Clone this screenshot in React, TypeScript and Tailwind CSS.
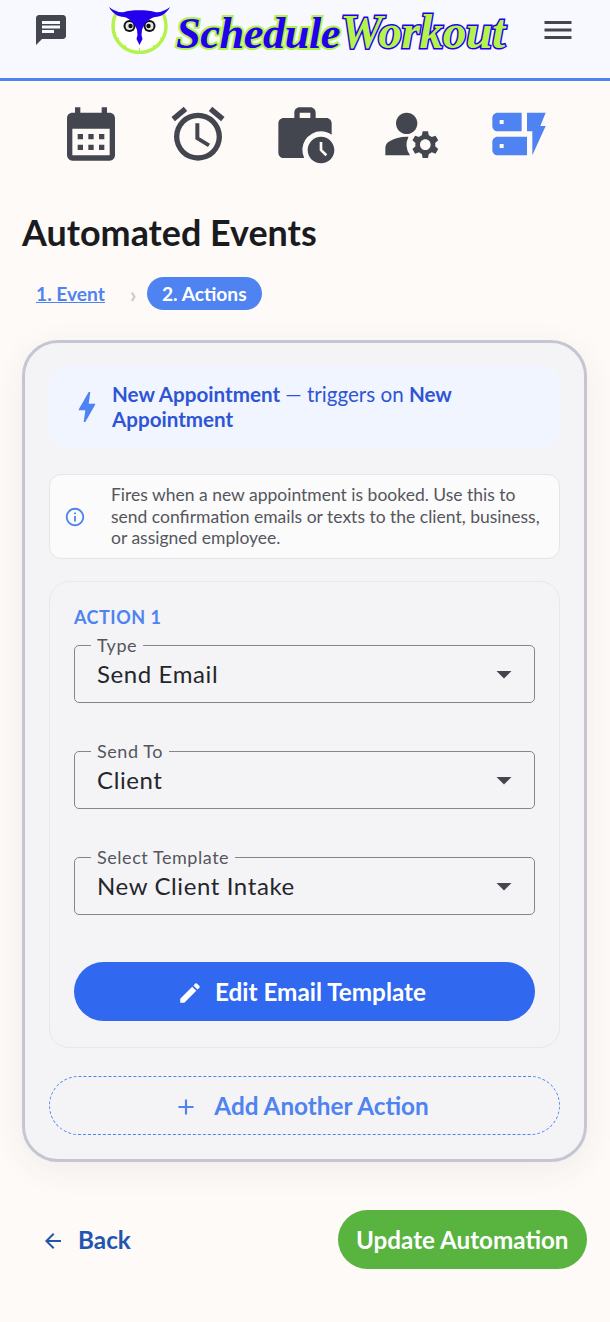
import React from "react";
import { MdChat, MdMenu, MdCalendarMonth, MdOutlineAlarm, MdWorkHistory, MdManageAccounts, MdDynamicForm, MdBolt, MdInfoOutline, MdEdit, MdAdd, MdArrowBack, MdArrowDropDown } from "react-icons/md";

function Owl() {
  return (
    <svg width="62" height="47" viewBox="0 0 62 47" className="shrink-0">
      <defs>
        <clipPath id="owlClip"><rect x="0" y="6" width="62" height="41" /></clipPath>
      </defs>
      <g clipPath="url(#owlClip)">
        <circle cx="30.5" cy="19" r="26.5" fill="#ffffff" stroke="#b4f34a" strokeWidth="3.5" />
      </g>
      <path d="M30.5 45v-4M7 33l3-2M54 33l-3-2M15 41l2-3M46 41l-2-3" stroke="#b4f34a" strokeWidth="1.3" />
      <circle cx="20.5" cy="19" r="6" fill="#111" />
      <circle cx="40.5" cy="19" r="6" fill="#111" />
      <circle cx="20.5" cy="19" r="4" fill="#e6e6e6" />
      <circle cx="40.5" cy="19" r="4" fill="#e6e6e6" />
      <circle cx="21.5" cy="19" r="2.2" fill="#111" />
      <circle cx="39.5" cy="19" r="2.2" fill="#111" />
      <path d="M0 0C5 4 11 6 15 5C21 2.500 40 2.500 46 5C50 6 56 4 61 0C58 6 52 10 46 10C41 11 35 16 33 23L32.500 28L33.500 32L30.500 38L27.500 32L28.500 28L28 23C26 16 20 11 15 10C9 10 3 6 0 0Z" fill="#2200ee" />
    </svg>
  );
}

function Select({ label, value }: { label: string; value: string }) {
  return (
    <fieldset className="relative h-[65px] border border-[#85858d] rounded-[5px] mt-[-7px] pl-[13px] pr-[23px] w-full">
      <legend className="ml-[3px] px-[6px] text-[18px] leading-[14px] tracking-[0.55px] text-[#55565d] whitespace-nowrap">{label}</legend>
      <div className="flex items-center justify-between h-[44px]">
        <span className="pl-[9px] text-[24px] leading-[30px] tracking-[0.6px] text-[#25262b]">{value}</span>
        <MdArrowDropDown className="text-[#45464d] mr-[-11px] w-[36px] h-[36px]" />
      </div>
    </fieldset>
  );
}

export default function App() {
  return (
    <div className="w-[610px] h-[1322px] overflow-hidden bg-[#fdfaf7] font-['Lato',sans-serif]">
      <header className="h-[81px] bg-[#f8f8ff] border-b-[3px] border-[#4f83f1] flex items-start pl-[33px] pr-[34px]">
        <MdChat className="w-[36px] h-[36px] text-[#44464f] mt-[12px]" />
        <div className="flex items-start ml-[40px] mt-[7px] whitespace-nowrap">
          <Owl />
          <div className="flex items-baseline ml-[5px] font-['Liberation_Serif',serif] italic font-bold leading-[50px]">
            <span className="text-[44.5px] tracking-[-0.5px] text-[#2200ee] [-webkit-text-stroke:4px_#b4f34a] [paint-order:stroke_fill]">Schedule</span>
            <span className="text-[47.5px] tracking-[-0.5px] text-[#b4f34a] [-webkit-text-stroke:3px_#2200ee] [paint-order:stroke_fill]">Workout</span>
          </div>
        </div>
        <MdMenu className="ml-auto w-[36px] h-[36px] text-[#44464f] mt-[12px]" />
      </header>

      <nav className="grid grid-cols-5 px-[38px] pt-[21px] h-[85px]">
        <MdCalendarMonth className="justify-self-center w-[64px] h-[64px] text-[#44464f]" />
        <MdOutlineAlarm className="justify-self-center w-[64px] h-[64px] text-[#44464f]" />
        <MdWorkHistory className="justify-self-center w-[64px] h-[64px] text-[#44464f]" />
        <MdManageAccounts className="justify-self-center w-[64px] h-[64px] text-[#44464f]" />
        <MdDynamicForm className="justify-self-center w-[64px] h-[64px] text-[#4f83f1]" />
      </nav>

      <main className="pl-[22px] pr-[23px]">
        <h1 className="mt-[45px] text-[35.9px] leading-[44px] font-bold text-[#1a1b20]">Automated Events</h1>
        <div className="flex items-center mt-[22px] pl-[14px] h-[33px] text-[19.2px] font-bold">
          <span className="text-[#4f83f1] underline pt-[1px]">1. Event</span>
          <span className="ml-[25px] w-[7px] text-[#c9c9c9] text-[22px] leading-[22px] mt-[2px]">›</span>
          <span className="ml-[10px] px-[15px] pt-[1px] h-[33px] flex items-center rounded-full bg-[#4f83f1] text-white">2. Actions</span>
        </div>

        <section className="mt-[30px] h-[822px] rounded-[36px] border-[3px] border-[#c6c6d2] bg-[#f4f4f7] px-[24px] pt-[23px] shadow-[0_8px_32px_rgba(60,60,90,0.07)]">
          <div className="h-[81px] rounded-[16px] bg-[#f0f5ff] flex items-center pl-[20px] pr-[60px]">
            <MdBolt className="w-[40px] h-[40px] shrink-0 text-[#4f83f1] ml-[-2px]" />
            <p className="ml-[5px] text-[20.6px] leading-[25px] text-[#2f55d4]"><b>New Appointment</b> — triggers on <b>New Appointment</b></p>
          </div>
          <div className="mt-[27px] h-[85px] rounded-[12px] border border-[#e4e4ea] bg-[#fbfbfb] flex items-center pl-[14px] pr-[12px]">
            <MdInfoOutline className="w-[22px] h-[22px] shrink-0 text-[#4f83f1]" />
            <p className="ml-[25px] text-[17.5px] leading-[21.500px] text-[#55565d]">Fires when a new appointment is booked. Use this to send confirmation emails or texts to the client, business, or assigned employee.</p>
          </div>
          <div className="mt-[22px] h-[467px] rounded-[20px] border border-[#e8e8ec] px-[24px] pt-[23px]">
            <div className="text-[18px] leading-[24px] font-bold tracking-[0.5px] text-[#4f83f1]">ACTION 1</div>
            <div className="flex flex-col gap-[48px] mt-[16px] h-[280px]">
              <Select label="Type" value="Send Email" />
              <Select label="Send To" value="Client" />
              <Select label="Select Template" value="New Client Intake" />
            </div>
            <button className="mt-[37px] w-full h-[59px] rounded-full bg-[#3168f0] text-white text-[24.300px] font-bold flex items-center justify-center gap-[12px] pr-[6px] pt-[2px]">
              <MdEdit className="w-[26px] h-[26px]" /> Edit Email Template
            </button>
          </div>
          <button className="mt-[28px] w-full h-[59px] rounded-full border border-dashed border-[#4f83f1] text-[#4f83f1] text-[24.300px] font-bold flex items-center justify-center gap-[15px] pr-[7px] pt-[2px]">
            <MdAdd className="w-[26px] h-[26px]" /> Add Another Action
          </button>
        </section>

        <div className="mt-[48px] flex items-center justify-between">
          <button className="flex items-center gap-[13px] pl-[19px] pt-[2px] text-[24.300px] font-bold text-[#2355ae]">
            <MdArrowBack className="w-[24px] h-[24px]" /> Back
          </button>
          <button className="h-[59px] px-[18.500px] pt-[2px] rounded-full bg-[#58b33f] text-white text-[24.200px] font-bold">Update Automation</button>
        </div>
      </main>
    </div>
  );
}
